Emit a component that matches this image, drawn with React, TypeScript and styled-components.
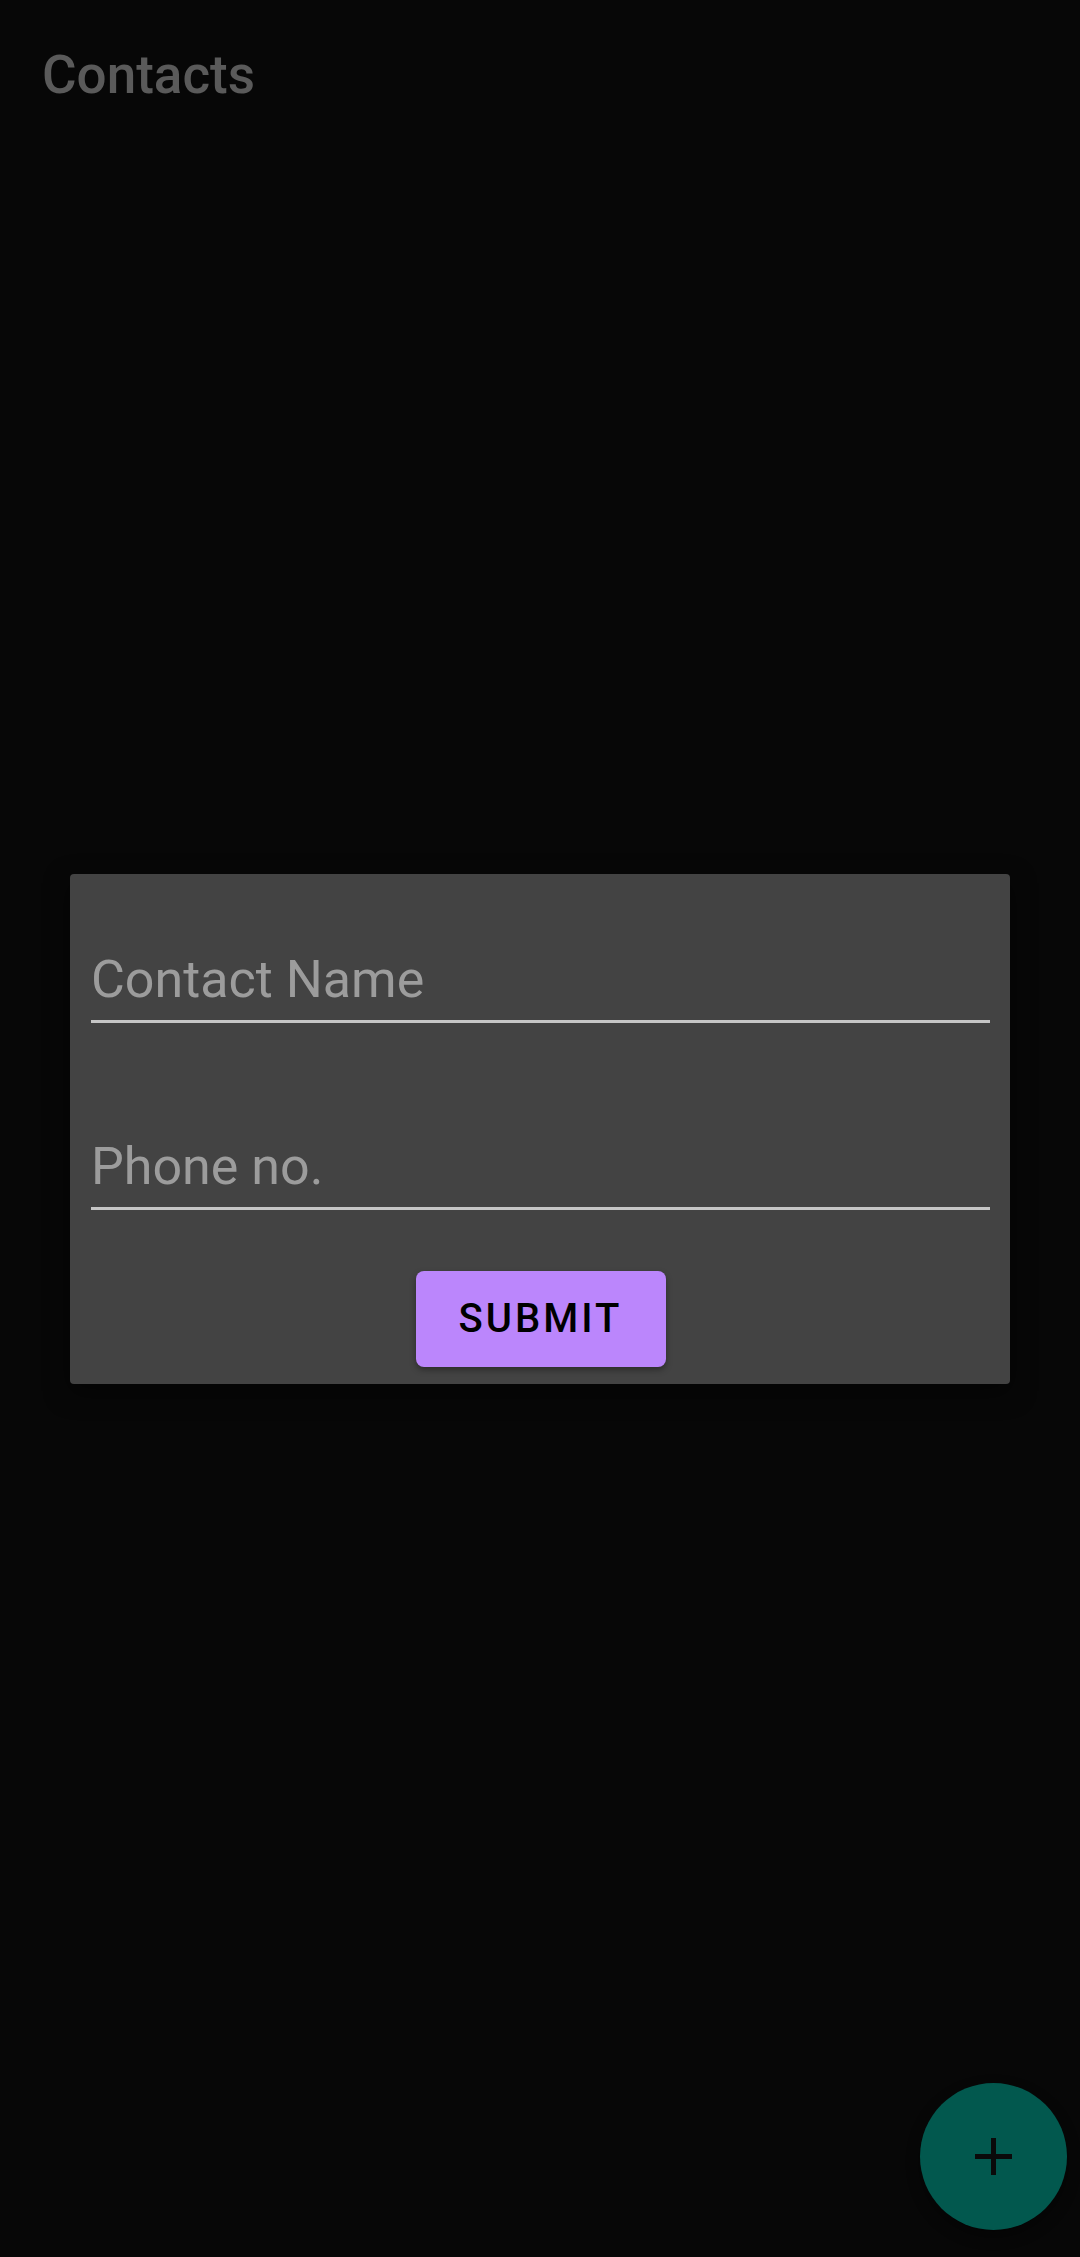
import React from "react";
import styled, { createGlobalStyle } from "styled-components";

const GlobalStyle = createGlobalStyle`
  html, body {
    margin: 0;
    padding: 0;
    background: #070707;
  }
  body {
    font-family: Roboto, "Noto Sans", "Liberation Sans", sans-serif;
  }
`;

const Screen = styled.div`
  position: relative;
  width: 1080px;
  height: 2257px;
  background: #070707;
  overflow: hidden;
`;

const Toolbar = styled.header`
  display: flex;
  align-items: flex-start;
  padding: 45px 0 0 42px;
`;

const Title = styled.h1`
  margin: 0;
  font-size: 53px;
  line-height: 60px;
  font-weight: 500;
  color: #5a5a5a;
`;

const Overlay = styled.div`
  position: absolute;
  inset: 0;
  display: flex;
  align-items: center;
  justify-content: center;
`;

const Dialog = styled.form`
  box-sizing: border-box;
  width: 940px;
  height: 510px;
  background: #434343;
  border-radius: 4px;
  box-shadow: 0 8px 24px rgba(0, 0, 0, 0.5);
  padding: 76px 20px 15px 21px;
  display: flex;
  flex-direction: column;
`;

const Field = styled.div<{ $gap?: number }>`
  margin-top: ${(p) => p.$gap ?? 0}px;
  padding-bottom: 10px;
  border-bottom: 3px solid #c6c6c6;
`;

const Placeholder = styled.div`
  font-size: 52px;
  line-height: 60px;
  color: #9c9c9c;
`;

const ButtonRow = styled.div`
  display: flex;
  justify-content: center;
  margin-top: 61px;
`;

const SubmitButton = styled.button`
  box-sizing: border-box;
  width: 250px;
  height: 96px;
  border: none;
  border-radius: 8px;
  background: #bb86fc;
  color: #000;
  font-family: Roboto, "Noto Sans", sans-serif;
  font-size: 40px;
  font-weight: 500;
  letter-spacing: 3px;
  box-shadow: 0 3px 6px rgba(0, 0, 0, 0.35);
  padding: 0;
`;

const Fab = styled.button`
  position: absolute;
  right: 13px;
  bottom: 27px;
  width: 147px;
  height: 147px;
  border-radius: 50%;
  border: none;
  background: #02584e;
  display: flex;
  align-items: center;
  justify-content: center;
  padding: 0;
  box-shadow: 0 6px 14px rgba(0, 0, 0, 0.4);
`;

export default function App() {
  return (
    <>
      <GlobalStyle />
      <Screen>
        <Toolbar>
          <Title>Contacts</Title>
        </Toolbar>
        <Overlay>
          <Dialog onSubmit={(e) => e.preventDefault()}>
            <Field>
              <Placeholder>Contact Name</Placeholder>
            </Field>
            <Field $gap={114}>
              <Placeholder>Phone no.</Placeholder>
            </Field>
            <ButtonRow>
              <SubmitButton type="submit">SUBMIT</SubmitButton>
            </ButtonRow>
          </Dialog>
        </Overlay>
        <Fab aria-label="Add">
          <svg width="37" height="37" viewBox="0 0 37 37">
            <rect x="16" y="0" width="5" height="37" fill="#0a0a0a" />
            <rect x="0" y="16" width="37" height="5" fill="#0a0a0a" />
          </svg>
        </Fab>
      </Screen>
    </>
  );
}
